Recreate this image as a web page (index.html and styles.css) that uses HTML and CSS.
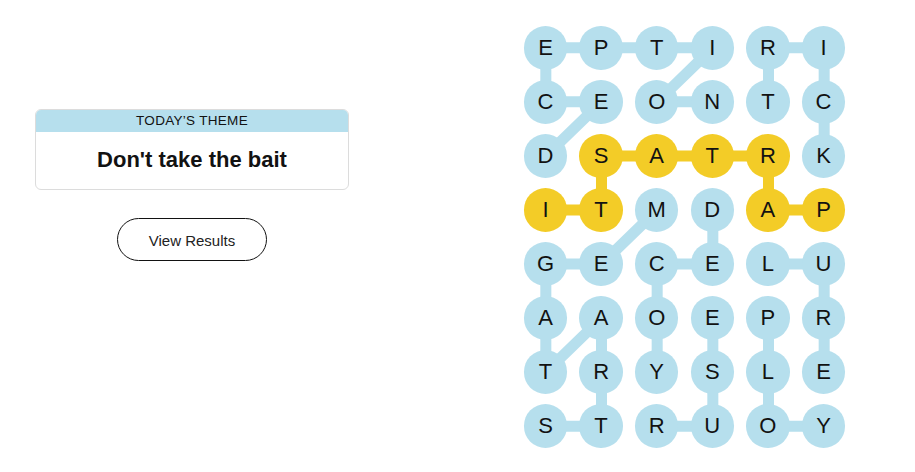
FILE: index.html
```html
<!DOCTYPE html>
<html lang="en">
<head>
<meta charset="utf-8">
<title>Strands</title>
<link rel="stylesheet" href="styles.css">
</head>
<body>
<div class="page">
  <section class="left">
    <div class="theme-card">
      <div class="theme-head">TODAY’S THEME</div>
      <div class="theme-body">Don't take the bait</div>
    </div>
    <button class="results-btn" type="button">View Results</button>
  </section>
  <section class="board">
    <svg class="links" width="322" height="422" viewBox="0 0 321.5 421.5" aria-hidden="true">
      <g fill="none" stroke="#b6dfed" stroke-width="11" stroke-linejoin="round">
        <polyline points="21.75,129.75 77.35,75.75 21.75,75.75 21.75,21.75 77.35,21.75 132.95,21.75 188.55,21.75 132.95,75.75 188.55,75.75"/>
        <polyline points="244.15,75.75 244.15,21.75 299.75,21.75 299.75,75.75 299.75,129.75"/>
        <polyline points="21.75,399.75 77.35,399.75 77.35,345.75 77.35,291.75 21.75,345.75 21.75,291.75 21.75,237.75 77.35,237.75 132.95,183.75"/>
        <polyline points="188.55,183.75 188.55,237.75 132.95,237.75 132.95,291.75 132.95,345.75"/>
        <polyline points="132.95,399.75 188.55,399.75 188.55,345.75 188.55,291.75"/>
        <polyline points="244.15,237.75 299.75,237.75 299.75,291.75 299.75,345.75"/>
        <polyline points="244.15,291.75 244.15,345.75 244.15,399.75 299.75,399.75"/>
      </g>
      <polyline fill="none" stroke="#f3cc27" stroke-width="11" stroke-linejoin="round" points="21.75,183.75 77.35,183.75 77.35,129.75 132.95,129.75 188.55,129.75 244.15,129.75 244.15,183.75 299.75,183.75"/>
    </svg>
    <div class="cell">E</div><div class="cell">P</div><div class="cell">T</div><div class="cell">I</div><div class="cell">R</div><div class="cell">I</div>
    <div class="cell">C</div><div class="cell">E</div><div class="cell">O</div><div class="cell">N</div><div class="cell">T</div><div class="cell">C</div>
    <div class="cell">D</div><div class="cell sp">S</div><div class="cell sp">A</div><div class="cell sp">T</div><div class="cell sp">R</div><div class="cell">K</div>
    <div class="cell sp">I</div><div class="cell sp">T</div><div class="cell">M</div><div class="cell">D</div><div class="cell sp">A</div><div class="cell sp">P</div>
    <div class="cell">G</div><div class="cell">E</div><div class="cell">C</div><div class="cell">E</div><div class="cell">L</div><div class="cell">U</div>
    <div class="cell">A</div><div class="cell">A</div><div class="cell">O</div><div class="cell">E</div><div class="cell">P</div><div class="cell">R</div>
    <div class="cell">T</div><div class="cell">R</div><div class="cell">Y</div><div class="cell">S</div><div class="cell">L</div><div class="cell">E</div>
    <div class="cell">S</div><div class="cell">T</div><div class="cell">R</div><div class="cell">U</div><div class="cell">O</div><div class="cell">Y</div>
  </section>
</div>
</body>
</html>
```

FILE: styles.css
```css
* { box-sizing: border-box; }

html, body {
  margin: 0;
  padding: 0;
  background: #ffffff;
}

body {
  font-family: "Liberation Sans", Arial, sans-serif;
  color: #121212;
}

.page {
  display: flex;
  align-items: flex-start;
  width: 915px;
  height: 472px;
}

.left {
  width: 314px;
  margin-left: 35px;
  padding-top: 109px;
  display: flex;
  flex-direction: column;
  align-items: center;
}

.theme-card {
  width: 314px;
  border: 1px solid #dcdcdc;
  border-radius: 6px;
  overflow: hidden;
}

.theme-head {
  height: 23px;
  background: #b6dfed;
  text-align: center;
  font-size: 13.5px;
  line-height: 24px;
  letter-spacing: 0.3px;
  color: #121212;
  margin: -1px -1px 0;
}

.theme-body {
  height: 57px;
  text-align: center;
  font-size: 22px;
  font-weight: 700;
  line-height: 56px;
  color: #121212;
}

.results-btn {
  margin-top: 28px;
  width: 150px;
  height: 43px;
  border: 1px solid #121212;
  border-radius: 22px;
  background: #ffffff;
  font-family: "Liberation Sans", Arial, sans-serif;
  font-size: 15px;
  line-height: 44px;
  color: #222222;
  padding: 0;
}

.board {
  position: relative;
  margin-left: 174.75px;
  margin-top: 26px;
  display: grid;
  grid-template-columns: repeat(6, 43.5px);
  grid-auto-rows: 43.5px;
  column-gap: 12.1px;
  row-gap: 10.5px;
}

.links {
  position: absolute;
  left: 0;
  top: 0;
  z-index: 0;
}

.cell {
  position: relative;
  z-index: 1;
  width: 43.5px;
  height: 43.5px;
  border-radius: 50%;
  background: #b6dfed;
  display: flex;
  align-items: center;
  justify-content: center;
  font-size: 22px;
  color: #121212;
}

.cell.sp {
  background: #f3cc27;
}
```
